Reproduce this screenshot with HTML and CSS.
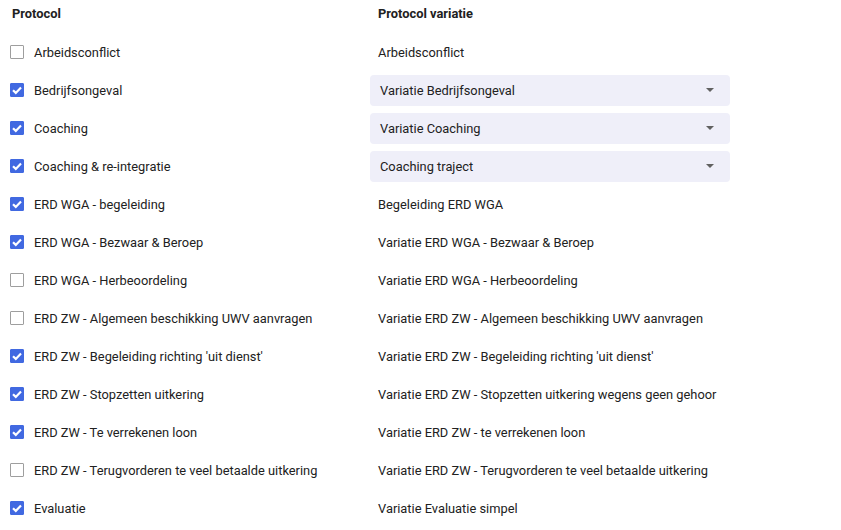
FILE: index.html
```html
<!DOCTYPE html>
<html>
<head>
<meta charset="utf-8">
<link rel="stylesheet" href="styles.css">
</head>
<body>
<div class="table">
  <div class="head first">Protocol</div>
  <div class="head second">Protocol variatie</div>

  <div class="cell left"><span class="cb"></span>Arbeidsconflict</div>
  <div class="cell right"><span class="plain">Arbeidsconflict</span></div>

  <div class="cell left"><span class="cb on"><svg viewBox="0 0 14 14"><path d="M3 7.2 L5.8 9.9 L11 4.5"/></svg></span>Bedrijfsongeval</div>
  <div class="cell right"><div class="select">Variatie Bedrijfsongeval<span class="arrow"></span></div></div>

  <div class="cell left"><span class="cb on"><svg viewBox="0 0 14 14"><path d="M3 7.2 L5.8 9.9 L11 4.5"/></svg></span>Coaching</div>
  <div class="cell right"><div class="select">Variatie Coaching<span class="arrow"></span></div></div>

  <div class="cell left"><span class="cb on"><svg viewBox="0 0 14 14"><path d="M3 7.2 L5.8 9.9 L11 4.5"/></svg></span>Coaching &amp; re-integratie</div>
  <div class="cell right"><div class="select">Coaching traject<span class="arrow"></span></div></div>

  <div class="cell left"><span class="cb on"><svg viewBox="0 0 14 14"><path d="M3 7.2 L5.8 9.9 L11 4.5"/></svg></span>ERD WGA - begeleiding</div>
  <div class="cell right"><span class="plain">Begeleiding ERD WGA</span></div>

  <div class="cell left"><span class="cb on"><svg viewBox="0 0 14 14"><path d="M3 7.2 L5.8 9.9 L11 4.5"/></svg></span>ERD WGA - Bezwaar &amp; Beroep</div>
  <div class="cell right"><span class="plain">Variatie ERD WGA - Bezwaar &amp; Beroep</span></div>

  <div class="cell left"><span class="cb"></span>ERD WGA - Herbeoordeling</div>
  <div class="cell right"><span class="plain">Variatie ERD WGA - Herbeoordeling</span></div>

  <div class="cell left"><span class="cb"></span>ERD ZW - Algemeen beschikking UWV aanvragen</div>
  <div class="cell right"><span class="plain">Variatie ERD ZW - Algemeen beschikking UWV aanvragen</span></div>

  <div class="cell left"><span class="cb on"><svg viewBox="0 0 14 14"><path d="M3 7.2 L5.8 9.9 L11 4.5"/></svg></span>ERD ZW - Begeleiding richting 'uit dienst'</div>
  <div class="cell right"><span class="plain">Variatie ERD ZW - Begeleiding richting 'uit dienst'</span></div>

  <div class="cell left"><span class="cb on"><svg viewBox="0 0 14 14"><path d="M3 7.2 L5.8 9.9 L11 4.5"/></svg></span>ERD ZW - Stopzetten uitkering</div>
  <div class="cell right"><span class="plain">Variatie ERD ZW - Stopzetten uitkering wegens geen gehoor</span></div>

  <div class="cell left"><span class="cb on"><svg viewBox="0 0 14 14"><path d="M3 7.2 L5.8 9.9 L11 4.5"/></svg></span>ERD ZW - Te verrekenen loon</div>
  <div class="cell right"><span class="plain">Variatie ERD ZW - te verrekenen loon</span></div>

  <div class="cell left"><span class="cb"></span>ERD ZW - Terugvorderen te veel betaalde uitkering</div>
  <div class="cell right"><span class="plain">Variatie ERD ZW - Terugvorderen te veel betaalde uitkering</span></div>

  <div class="cell left"><span class="cb on"><svg viewBox="0 0 14 14"><path d="M3 7.2 L5.8 9.9 L11 4.5"/></svg></span>Evaluatie</div>
  <div class="cell right"><span class="plain">Variatie Evaluatie simpel</span></div>
</div>
</body>
</html>
```
FILE: styles.css
```css
html, body {
  margin: 0;
  padding: 0;
  background: #ffffff;
}
body {
  font-family: Roboto, "Liberation Sans", sans-serif;
  font-size: 12.85px;
  color: #212121;
}
.table {
  display: grid;
  grid-template-columns: 360px 360px;
  grid-template-rows: 33px;
  grid-auto-rows: 38px;
  padding-left: 10px;
}
.head {
  font-weight: 700;
  line-height: 15px;
  padding-top: 6px;
}
.head.first { padding-left: 2px; }
.head.second { padding-left: 8px; }
.cell {
  display: flex;
  align-items: center;
}
.left { gap: 10px; }
.cb {
  box-sizing: border-box;
  width: 14px;
  height: 14px;
  border: 1.5px solid #9e9e9e;
  border-radius: 1px;
  flex: none;
  display: flex;
}
.cb.on {
  background: #4169e1;
  border-color: #4169e1;
}
.cb svg {
  width: 14px;
  height: 14px;
  margin: -1.5px;
  fill: none;
  stroke: #fff;
  stroke-width: 2.2;
}
.plain { padding-left: 8px; }
.select {
  box-sizing: border-box;
  width: 360px;
  height: 31px;
  background: #efeff9;
  border-radius: 4px;
  display: flex;
  align-items: center;
  justify-content: space-between;
  padding: 0 16px 0 10px;
}
.arrow {
  width: 0;
  height: 0;
  border-left: 4.5px solid transparent;
  border-right: 4.5px solid transparent;
  border-top: 4.5px solid #616161;
}
```
